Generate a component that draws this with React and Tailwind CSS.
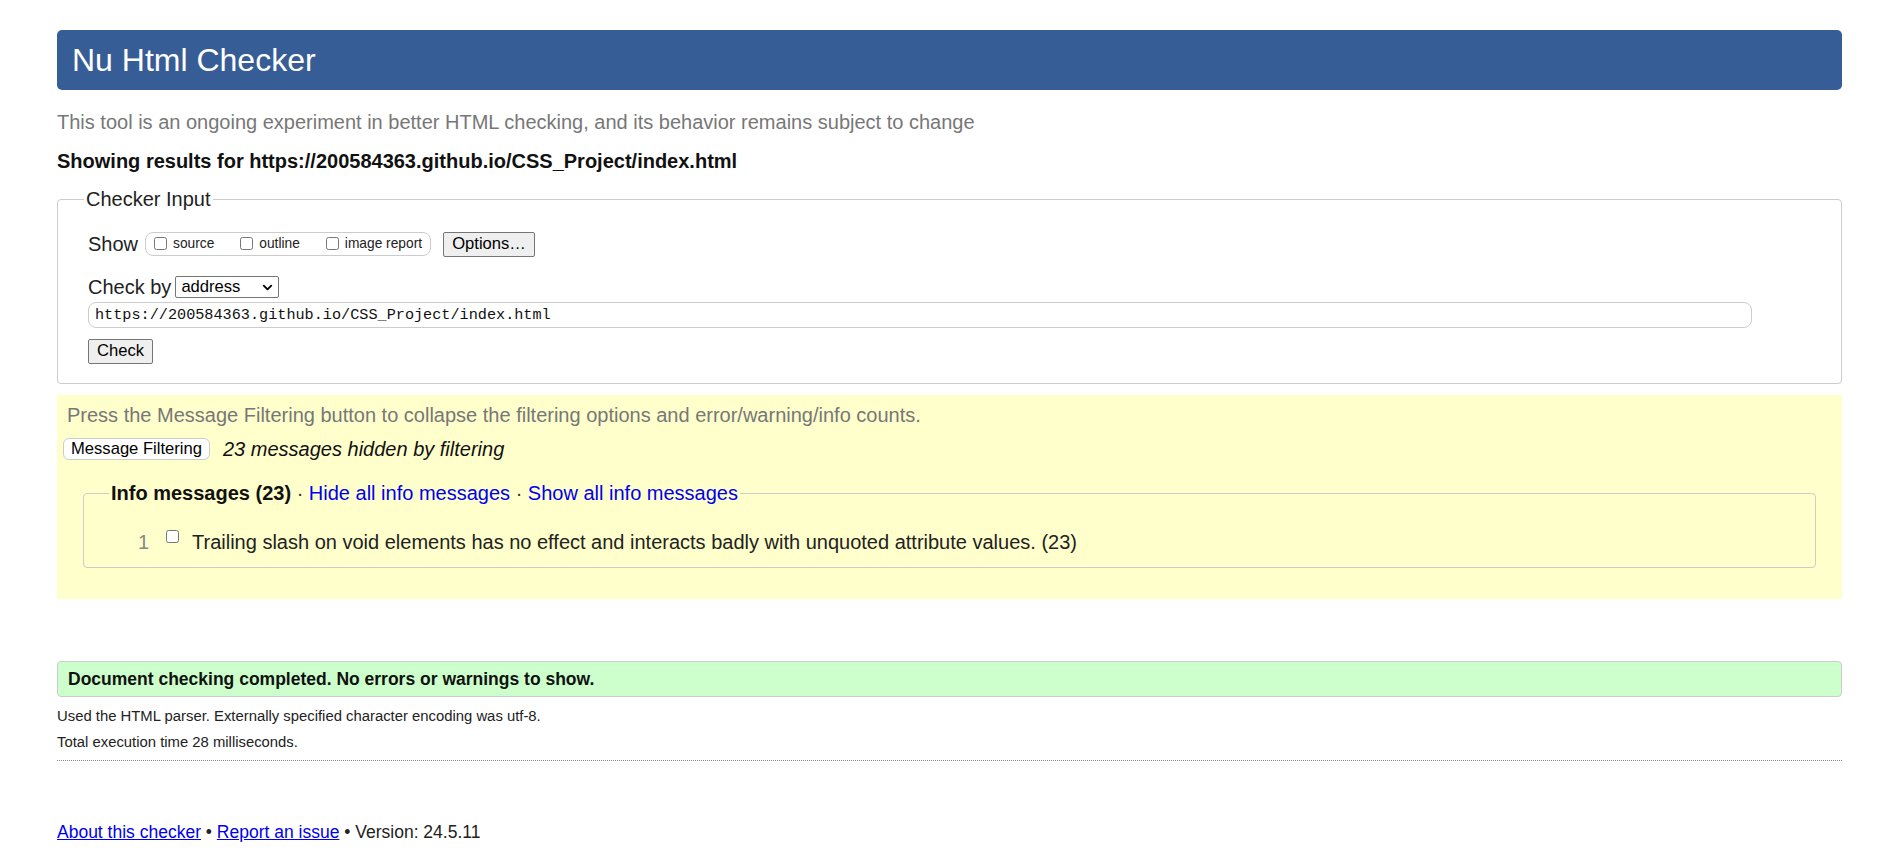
import React from "react";
import { ChevronDown } from "lucide-react";

const font = "font-['Liberation_Sans',Arial,sans-serif]";

const Box = ({ label }) => (
  <label className="flex items-start">
    <input
      type="checkbox"
      className="m-0 mt-[2px] h-[13px] w-[13px] accent-[#555]"
    />
    <span className="ml-[6px] text-[13.75px] leading-[17px] text-[#222]">
      {label}
    </span>
  </label>
);

const App = () => {
  return (
    <div className={`${font} min-h-screen bg-white pl-[57px] pr-[55px] text-[20px] text-[#222]`}>
      {/* Header */}
      <div className="mt-[30px] flex h-[60px] items-center rounded-[5px] bg-[#365d95] px-[15px]">
        <h1 className="text-[32px] font-normal leading-none text-white">
          Nu Html Checker
        </h1>
      </div>

      <p className="mt-[20px] leading-[24px] text-[#777]">
        This tool is an ongoing experiment in better HTML checking, and its
        behavior remains subject to change
      </p>

      <p className="mt-[16px] text-[20px] font-bold leading-[22px] text-[#111]">
        Showing results for https://200584363.github.io/CSS_Project/index.html
      </p>

      {/* Checker Input */}
      <fieldset className="mt-[15px] rounded-[4px] border border-[#ccc] px-[30px] pb-[19px] pt-[20px]">
        <legend className="-ml-[4px] px-[2px] leading-[24px] text-[#222]">
          Checker Input
        </legend>

        <div className="flex h-[26px] items-center">
          <span className="mr-[7px]">Show</span>
          <div className="flex h-[24px] w-[286px] items-start gap-[26px] rounded-[8px] border border-[#ccc] pl-[8px] pt-[2px]">
            <Box label="source" />
            <Box label="outline" />
            <Box label="image report" />
          </div>
          <button className="ml-[12px] h-[25px] w-[92px] rounded-[2px] border border-[#767676] bg-[#efefef] text-[16.6px] leading-none text-black">
            Options…
          </button>
        </div>

        <div className="mt-[19px] flex h-[22px] items-center">
          <span className="mr-[4px]">Check by</span>
          <div className="flex h-[22px] w-[104px] items-center justify-between rounded-[2px] border border-[#767676] bg-white pl-[5px] pr-[3px] text-[16.6px] leading-none text-black">
            <span>address</span>
            <ChevronDown className="h-[15px] w-[15px]" strokeWidth={3} />
          </div>
        </div>

        <div className="mt-[4px] flex h-[26px] w-[1664px] items-center rounded-[8px] border border-[#ccc] pl-[6px] font-['Liberation_Mono',monospace] text-[15.2px] text-[#111]">
          https://200584363.github.io/CSS_Project/index.html
        </div>

        <button className="mt-[11px] h-[25px] w-[65px] rounded-[2px] border border-[#767676] bg-[#efefef] text-[16.6px] leading-none text-black">
          Check
        </button>
      </fieldset>

      {/* Filtering */}
      <div className="mt-[11px] bg-[#ffffcc] px-[6px] pb-[31px] pt-[8px]">
        <p className="pl-[4px] leading-[24px] text-[#777]">
          Press the Message Filtering button to collapse the filtering options
          and error/warning/info counts.
        </p>
        <div className="mt-[10px] flex items-center">
          <button className="h-[22px] w-[147px] rounded-[6px] border border-[#ccc] bg-white text-[16.6px] leading-none text-black">
            Message Filtering
          </button>
          <span className="ml-[13px] italic leading-[24px] text-[#111]">
            23 messages hidden by filtering
          </span>
        </div>

        <fieldset className="mx-[20px] mt-[20px] rounded-[4px] border border-[#ccc] pb-[13px] pt-[25px]">
          <legend className="ml-[25px] px-[2px] leading-[24px]">
            <span className="font-bold text-[#111]">Info messages (23)</span>
            <span className="text-[#333]"> · </span>
            <a className="text-[#00e]" href="#">Hide all info messages</a>
            <span className="text-[#333]"> · </span>
            <a className="text-[#00e]" href="#">Show all info messages</a>
          </legend>
          <div className="flex items-start leading-[24px]">
            <span className="w-[65px] text-right text-[#888]">1</span>
            <input
              type="checkbox"
              className="m-0 ml-[17px] mt-0 h-[13px] w-[13px]"
            />
            <span className="ml-[13px] text-[#222]">
              Trailing slash on void elements has no effect and interacts badly
              with unquoted attribute values. (23)
            </span>
          </div>
        </fieldset>
      </div>

      {/* Result */}
      <div className="mt-[62px] flex h-[36px] items-center rounded-[4px] border border-[#ccc] bg-[#ccffcc] pl-[10px]">
        <p className="text-[17.5px] font-bold text-[#111]">
          Document checking completed. No errors or warnings to show.
        </p>
      </div>

      <p className="mt-[10px] text-[14.85px] leading-[18px] text-[#222]">
        Used the HTML parser. Externally specified character encoding was utf-8.
      </p>
      <p className="mt-[8px] text-[14.85px] leading-[18px] text-[#222]">
        Total execution time 28 milliseconds.
      </p>

      <div className="mt-[9px] border-t border-dotted border-[#888]" />

      <p className="mt-[61px] pb-[20px] text-[17.5px] leading-[21px] text-[#222]">
        <a className="text-[#00e] underline" href="#">About this checker</a>
        {" • "}
        <a className="text-[#00e] underline" href="#">Report an issue</a>
        {" • Version: 24.5.11"}
      </p>
    </div>
  );
};

export default App;
